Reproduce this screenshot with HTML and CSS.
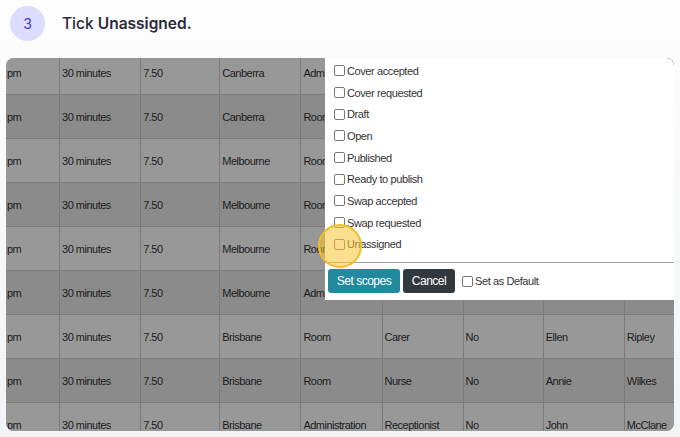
FILE: index.html
```html
<!DOCTYPE html>
<html lang="en">
<head>
    <meta charset="UTF-8">
    <title>Step 3 - Tick Unassigned</title>
    <link rel="stylesheet" href="styles.css">
</head>
<body>
    <div class="step-header">
        <div class="step-number">3</div>
        <div class="step-title">Tick <b>Unassigned.</b></div>
    </div>

    <div class="shot">
        <table class="shifts">
            <tr class="light"><td>pm</td><td>30 minutes</td><td>7.50</td><td>Canberra</td><td class="under"><span>Administration</span></td><td></td><td></td><td></td><td></td></tr>
            <tr class="dark"><td>pm</td><td>30 minutes</td><td>7.50</td><td>Canberra</td><td class="under"><span>Room</span></td><td></td><td></td><td></td><td></td></tr>
            <tr class="light"><td>pm</td><td>30 minutes</td><td>7.50</td><td>Melbourne</td><td class="under"><span>Room</span></td><td></td><td></td><td></td><td></td></tr>
            <tr class="dark"><td>pm</td><td>30 minutes</td><td>7.50</td><td>Melbourne</td><td class="under"><span>Room</span></td><td></td><td></td><td></td><td></td></tr>
            <tr class="light"><td>pm</td><td>30 minutes</td><td>7.50</td><td>Melbourne</td><td class="under"><span>Room</span></td><td></td><td></td><td></td><td></td></tr>
            <tr class="dark"><td>pm</td><td>30 minutes</td><td>7.50</td><td>Melbourne</td><td class="under"><span>Administration</span></td><td></td><td></td><td></td><td></td></tr>
            <tr class="light"><td>pm</td><td>30 minutes</td><td>7.50</td><td>Brisbane</td><td>Room</td><td>Carer</td><td>No</td><td>Ellen</td><td>Ripley</td></tr>
            <tr class="dark"><td>pm</td><td>30 minutes</td><td>7.50</td><td>Brisbane</td><td>Room</td><td>Nurse</td><td>No</td><td>Annie</td><td>Wilkes</td></tr>
            <tr class="light"><td>pm</td><td>30 minutes</td><td>7.50</td><td>Brisbane</td><td>Administration</td><td>Receptionist</td><td>No</td><td>John</td><td>McClane</td></tr>
        </table>

        <div class="scope-popup">
            <ul class="scope-list">
                <li><span class="box"></span>Cover accepted</li>
                <li><span class="box"></span>Cover requested</li>
                <li><span class="box"></span>Draft</li>
                <li><span class="box"></span>Open</li>
                <li><span class="box"></span>Published</li>
                <li><span class="box"></span>Ready to publish</li>
                <li><span class="box"></span>Swap accepted</li>
                <li><span class="box"></span>Swap requested</li>
                <li><span class="box"></span>Unassigned</li>
            </ul>
            <div class="scope-footer">
                <button class="btn btn-primary">Set scopes</button>
                <button class="btn btn-dark">Cancel</button>
                <span class="default-check"><span class="box"></span>Set as Default</span>
            </div>
        </div>

        <div class="click-marker"></div>
    </div>
</body>
</html>
```

FILE: styles.css
```css
body {
    margin: 0;
    font-family: Inter, "Noto Sans", sans-serif;
    background: linear-gradient(#fdfdfe, #f2f4f7);
    height: 437px;
    overflow: hidden;
}
.step-header {
    display: flex;
    align-items: center;
    height: 46px;
    padding: 0 0 0 10px;
    margin-bottom: 12px;
}
.step-number {
    width: 35px;
    height: 35px;
    border-radius: 50%;
    background-color: #dcdcfc;
    color: #4338d8;
    font-size: 14px;
    display: flex;
    align-items: center;
    justify-content: center;
    margin-right: 17px;
}
.step-title {
    font-size: 15.5px;
    font-weight: 500;
    color: #2a2b38;
}
.step-title b {
    font-weight: 600;
}

.shot {
    position: relative;
    margin-left: 6px;
    width: 668px;
    height: 373px;
    border-radius: 8px;
    overflow: hidden;
    background-color: #939393;
}
.shifts {
    border-collapse: collapse;
    table-layout: fixed;
    width: 700px;
    margin-top: -8px;
    font-family: "Liberation Sans", Arial, sans-serif;
    font-size: 11px;
    letter-spacing: -0.5px;
    color: #1c1c1c;
}
.shifts td {
    height: 43px;
    padding: 0 0 0 2px;
    border: 1px solid #7b7b7b;
    white-space: nowrap;
    overflow: hidden;
}
.shifts td:first-child { width: 52px; padding-left: 1px; border-left: none; }
.shifts td:nth-child(2) { width: 78px; }
.shifts td:nth-child(3) { width: 76px; }
.shifts td:nth-child(n+4) { width: 78px; }
.shifts td:nth-child(7) { width: 77px; }
.shifts td.under span {
    display: block;
    width: 23px;
    overflow: hidden;
}
.shifts tr.light { background-color: #989898; }
.shifts tr.dark { background-color: #8b8b8b; }

.scope-popup {
    position: absolute;
    left: 319px;
    top: 0;
    right: 0;
    height: 242px;
    background-color: white;
    border-top-right-radius: 8px;
    font-family: "Liberation Sans", Arial, sans-serif;
    font-size: 11px;
    letter-spacing: -0.4px;
    color: #333;
}
.scope-list {
    list-style: none;
    margin: 0;
    padding: 2px 0 7px 9px;
    border-bottom: 1px solid #a0a0a0;
}
.scope-list li {
    display: flex;
    align-items: center;
    height: 21.7px;
}
.box {
    display: inline-block;
    width: 9px;
    height: 9px;
    border: 1px solid #777;
    border-radius: 2px;
    margin-right: 2px;
    background: white;
}
.scope-footer {
    display: flex;
    align-items: center;
    padding: 6px 3px;
}
.btn {
    height: 24px;
    border: none;
    border-radius: 3px;
    color: white;
    font-family: "Liberation Sans", Arial, sans-serif;
    font-size: 12px;
    letter-spacing: -0.5px;
    padding: 0;
    margin-right: 3px;
}
.btn-primary { width: 72px; background-color: #218a9f; }
.btn-dark { width: 52px; background-color: #32393e; }
.default-check {
    display: flex;
    align-items: center;
    margin-left: 4px;
}

.click-marker {
    position: absolute;
    left: 312px;
    top: 166px;
    width: 40px;
    height: 40px;
    border-radius: 50%;
    border: 2px solid #f0bd2a;
    background-color: rgba(246, 196, 50, 0.55);
}
```
